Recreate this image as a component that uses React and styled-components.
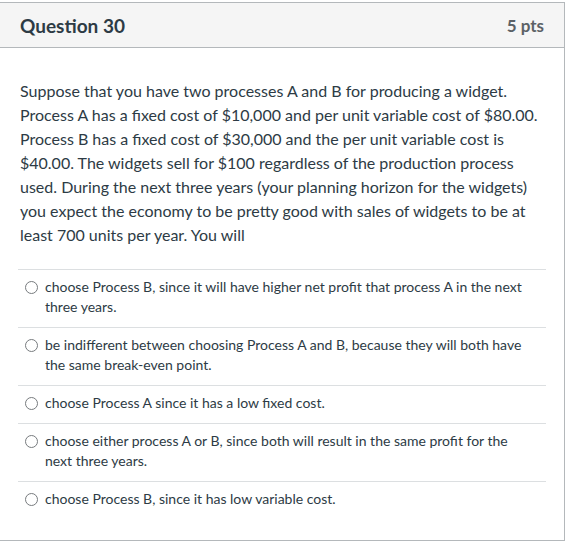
import React from "react";
import styled, { createGlobalStyle } from "styled-components";

const GlobalStyle = createGlobalStyle`
   html, body {
      margin: 0;
      padding: 0;
      background: #ffffff;
   }
   body {
      font-family: Lato, "Open Sans", sans-serif;
      color: #2d3b45;
      overflow: hidden;
   }
`;

const answers = [
   "choose Process B, since it will have higher net profit that process A in the next three years.",
   "be indifferent between choosing Process A and B, because they will both have the same break-even point.",
   "choose Process A since it has a low fixed cost.",
   "choose either process A or B, since both will result in the same profit for the next three years.",
   "choose Process B, since it has low variable cost.",
];

class App extends React.Component {
   state = { selected: null };

   pick = index => {
      this.setState({ selected: index });
   };

   render() {
      let { selected } = this.state;
      return (
         <>
            <GlobalStyle />
            <Card>
               <Header>
                  <Title>Question 30</Title>
                  <Points>5 pts</Points>
               </Header>
               <Body>
                  <QuestionText>
                     Suppose that you have two processes A and B for producing a widget.
                     Process A has a fixed cost of $10,000 and per unit variable cost of
                     $80.00. Process B has a fixed cost of $30,000 and the per unit variable
                     cost is $40.00. The widgets sell for $100 regardless of the production
                     process used. During the next three years (your planning horizon for the
                     widgets) you expect the economy to be pretty good with sales of widgets
                     to be at least 700 units per year. You will
                  </QuestionText>
                  <AnswerList>
                     {answers.map((text, i) => (
                        <Answer key={i} onClick={() => this.pick(i)}>
                           <Radio checked={selected === i} />
                           <AnswerText>{text}</AnswerText>
                        </Answer>
                     ))}
                  </AnswerList>
               </Body>
            </Card>
         </>
      );
   }
}

const Card = styled.div`
   box-sizing: border-box;
   width: 566px;
   height: 539px;
   margin: 2px 0 0 -1px;
   border: 1px solid #b4b8bb;
   background: #ffffff;
`;

const Header = styled.div`
   box-sizing: border-box;
   height: 45px;
   display: flex;
   align-items: center;
   justify-content: space-between;
   padding: 0 20px 0 20px;
   background: #f5f5f5;
   border-bottom: 1px solid #b4b8bb;
`;

const Title = styled.h2`
   margin: 0;
   font-size: 19px;
   font-weight: 700;
   color: #2d3b45;
`;

const Points = styled.span`
   font-size: 17px;
   font-weight: 700;
   color: #5b6166;
`;

const Body = styled.div`
   padding: 31px 18px 20px 18px;
`;

const QuestionText = styled.p`
   margin: 0 0 22px 2px;
   font-size: 16px;
   line-height: 24px;
   color: #2d3b45;
`;

const AnswerList = styled.div`
   border-top: 1px solid #dcdfe1;
`;

const Answer = styled.label`
   display: flex;
   align-items: flex-start;
   padding: 7px 0 10px 7px;
   border-top: 1px solid #dcdfe1;
   cursor: pointer;
   &:first-child {
      border-top: none;
   }
`;

const Radio = styled.span`
   flex: none;
   box-sizing: border-box;
   width: 13px;
   height: 13px;
   margin: 4px 7px 0 0;
   border-radius: 50%;
   border: 1px solid ${({ checked }) => (checked ? "#0374b5" : "#777b7e")};
   background: ${({ checked }) =>
      checked ? "radial-gradient(circle, #0374b5 0 3px, #fff 3.5px)" : "#fff"};
`;

const AnswerText = styled.span`
   font-size: 14px;
   line-height: 20px;
   color: #2d3b45;
   padding-right: 20px;
`;

export default App;
